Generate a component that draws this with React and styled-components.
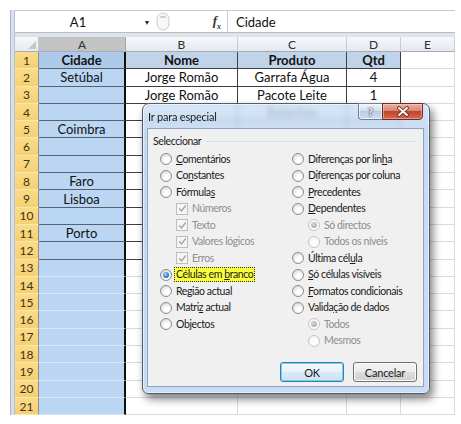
import React from 'react';
import styled, { createGlobalStyle, css } from 'styled-components';

const GlobalStyle = createGlobalStyle`
  html, body { margin: 0; padding: 0; background: #ffffff; }
  body { font-family: Lato, "Liberation Sans", sans-serif; color: #111; }
`;

const Page = styled.div`
  padding: 10px 0 0 10px;
`;

const Window = styled.div`
  position: relative;
  display: flex;
  width: 445px;
`;

const Edge = styled.div`
  width: 3px;
  flex: none;
  background: #d5e0ee;
  border-left: 1px solid #a9b7c9;
  border-right: 1px solid #b7c4d5;
`;

const Main = styled.div`
  flex: 1;
  display: flex;
  flex-direction: column;
`;

/* ---------- formula bar ---------- */

const FormulaBar = styled.div`
  height: 23px;
  box-sizing: border-box;
  display: flex;
  align-items: center;
  background: #ffffff;
  border-top: 1px solid #c3cbd6;
  border-bottom: 1px solid #b4bec9;
  font-size: 13px;
`;

const NameBox = styled.div`
  width: 126px;
  text-align: center;
`;

const NameArrow = styled.div`
  width: 12px;
  text-align: center;
  font-size: 7px;
  color: #2b2b2b;
`;

const FxZone = styled.div`
  width: 75px;
  height: 100%;
  box-sizing: border-box;
  display: flex;
  align-items: center;
  justify-content: space-between;
  padding: 0 6px 0 3px;
  border-right: 1px solid #c5ccd5;
`;

const Fx = styled.span`
  font-family: "Liberation Serif", serif;
  font-style: italic;
  font-weight: 700;
  font-size: 13px;
  color: #333;
  sub { font-size: 8px; }
`;

const Formula = styled.div`
  padding-left: 8px;
`;

const Band = styled.div`
  height: 4px;
  background: #dfe4ea;
`;

/* ---------- sheet grid ---------- */

const Grid = styled.div`
  display: grid;
  grid-template-columns: 24px 87px 112px 109px 54px 54px;
  grid-template-rows: 15px repeat(21, 17.3px);
`;

const Corner = styled.div`
  position: relative;
  box-sizing: border-box;
  background: linear-gradient(#f6f7f9, #e7eaef);
  border-right: 1px solid #c3c9d1;
  border-bottom: 1px solid #a4aeba;
  &::after {
    content: '';
    position: absolute;
    right: 2px;
    bottom: 2px;
    border-left: 8px solid transparent;
    border-bottom: 8px solid #c2c7cf;
  }
`;

const ColHead = styled.div`
  box-sizing: border-box;
  display: flex;
  align-items: center;
  justify-content: center;
  font-size: 12px;
  color: #2e2e2e;
  background: ${p => (p.$active ? '#c3c3c3' : 'linear-gradient(#f7f8fa, #e4e8ee)')};
  border-right: 1px solid ${p => (p.$active ? '#a6a6a6' : '#c6ccd4')};
  border-bottom: 1px solid #a4aeba;
`;

const RowHead = styled.div`
  box-sizing: border-box;
  display: flex;
  align-items: center;
  justify-content: center;
  font-size: 12px;
  color: #3a3322;
  background: linear-gradient(#fadc88, #f6d070);
  border-right: 1px solid #8f8f8f;
  border-bottom: 1px solid #fbe7ae;
`;

const Cell = styled.div`
  box-sizing: border-box;
  display: flex;
  align-items: center;
  justify-content: center;
  overflow: hidden;
  white-space: nowrap;
  font-size: 13px;
  font-weight: ${p => (p.$bold ? 700 : 400)};
  color: #111;
  background: ${p => p.$bg};
  border-right: ${p => p.$rw}px solid ${p => p.$rc};
  border-bottom: 1px solid ${p => p.$bc};
`;

/* ---------- dialog ---------- */

const Dialog = styled.div`
  position: absolute;
  left: 132px;
  top: 93px;
  width: 288px;
  height: 291px;
  box-sizing: border-box;
  display: flex;
  flex-direction: column;
  padding: 0 5px 6px 4px;
  border: 1px solid #4e5d6e;
  border-radius: 7px 7px 6px 6px;
  background: linear-gradient(rgba(205, 224, 246, 0.78), rgba(190, 212, 240, 0.86) 30px, rgba(196, 216, 242, 0.9));
  backdrop-filter: blur(2.5px);
  box-shadow: inset 0 0 0 1px rgba(255, 255, 255, 0.55), 3px 5px 9px rgba(0, 0, 0, 0.5);
  font-size: 10.5px;
  letter-spacing: -0.4px;
  color: #1b1b1b;
`;

const TitleBar = styled.div`
  height: 24px;
  flex: none;
  display: flex;
  justify-content: space-between;
  align-items: flex-start;
`;

const Title = styled.div`
  align-self: center;
  padding-left: 1px;
  font-size: 11px;
  letter-spacing: -0.2px;
  color: #1a1a1a;
`;

const Caption = styled.div`
  display: flex;
  margin-right: 1px;
  margin-top: -1px;
`;

const HelpButton = styled.div`
  width: 24px;
  height: 17px;
  box-sizing: border-box;
  display: flex;
  align-items: center;
  justify-content: center;
  border: 1px solid #6f8199;
  border-right: none;
  border-radius: 0 0 0 4px;
  background: linear-gradient(#eef4fb, #d3e0f0 45%, #bccde3 50%, #cddcee);
  box-shadow: inset 0 0 0 1px rgba(255, 255, 255, 0.6);
  font-size: 12px;
  font-weight: 700;
  letter-spacing: 0;
  color: #f4f7fb;
  text-shadow: 0 0 1px #4b5566, 0 0 1px #4b5566, 0 0 2px #4b5566;
`;

const CloseButton = styled.div`
  width: 41px;
  height: 17px;
  box-sizing: border-box;
  display: flex;
  align-items: center;
  justify-content: center;
  border: 1px solid #6b2c22;
  border-radius: 0 0 4px 0;
  background: linear-gradient(#eab2a4, #d98672 45%, #c4432d 50%, #d5694f);
  box-shadow: inset 0 0 0 1px rgba(255, 220, 210, 0.45);
`;

const Client = styled.div`
  flex: 1;
  display: flex;
  flex-direction: column;
  background: #f0f0f0;
  border: 1px solid #8ea4c0;
  padding: 5px 0 4px 0;
`;

const GroupHeader = styled.div`
  height: 14px;
  display: flex;
  align-items: center;
  padding: 0 8px 0 5px;
  gap: 5px;
`;

const Rule = styled.div`
  flex: 1;
  height: 1px;
  background: #d5dde5;
`;

const Columns = styled.div`
  display: grid;
  grid-template-columns: 132px 1fr;
  padding-left: 12px;
  margin-top: 3px;
`;

const Column = styled.div`
  display: flex;
  flex-direction: column;
`;

const OptionRow = styled.div`
  height: 16.5px;
  display: flex;
  align-items: center;
  gap: 4px;
  padding-left: ${p => (p.$sub ? 16 : 0)}px;
  color: ${p => (p.$disabled ? '#8e8e8e' : '#1b1b1b')};
  white-space: nowrap;
`;

const Label = styled.span`
  line-height: 15px;
  ${p =>
    p.$focus &&
    css`
      background: #f9ff3a;
      outline: 1px dotted #2a2a2a;
      outline-offset: -1px;
      padding: 0 2px;
      margin-left: -2px;
    `}
`;

const Radio = styled.span`
  position: relative;
  flex: none;
  width: 12px;
  height: 12px;
  box-sizing: border-box;
  border-radius: 50%;
  border: 1px solid ${p => (p.$disabled ? '#c6c6c6' : '#8d8d8d')};
  background: ${p =>
    p.$disabled
      ? 'radial-gradient(circle at 55% 60%, #fdfdfd 0 35%, #ededed 100%)'
      : 'radial-gradient(circle at 60% 65%, #ffffff 0 25%, #e4e4e4 65%, #c4c4c4 100%)'};
  &::after {
    content: '';
    display: ${p => (p.$checked ? 'block' : 'none')};
    position: absolute;
    left: 2px;
    top: 2px;
    width: 6px;
    height: 6px;
    border-radius: 50%;
    background: ${p =>
      p.$disabled
        ? 'radial-gradient(circle at 40% 35%, #d8d8d8, #9c9c9c)'
        : 'radial-gradient(circle at 40% 35%, #a6ddff, #2a6fc6 65%, #163f80)'};
  }
`;

const CheckBox = styled.span`
  flex: none;
  width: 12px;
  height: 12px;
  box-sizing: border-box;
  display: flex;
  align-items: center;
  justify-content: center;
  border: 1px solid #bdbdbd;
  background: #f5f5f5;
`;

const ButtonRow = styled.div`
  margin-top: auto;
  display: flex;
  justify-content: flex-end;
  gap: 9px;
  padding-right: 6px;
`;

const PushButton = styled.div`
  width: 64px;
  height: 20px;
  box-sizing: border-box;
  display: flex;
  align-items: center;
  justify-content: center;
  border-radius: 3px;
  border: 1px solid ${p => (p.$default ? '#3d7bad' : '#707070')};
  background: ${p =>
    p.$default
      ? 'linear-gradient(#f3f8fc, #e9f2fa 50%, #d9e9f6 51%, #cfe3f3)'
      : 'linear-gradient(#f4f4f4, #ebebeb 50%, #dddddd 51%, #d0d0d0)'};
  box-shadow: inset 0 0 0 1px ${p => (p.$default ? '#6fd1f6' : '#fbfbfb')};
  font-size: 11px;
  letter-spacing: -0.2px;
  color: #1b1b1b;
`;

/* ---------- data ---------- */

const COLS = ['A', 'B', 'C', 'D', 'E'];

const DATA = {
  1: ['Cidade', 'Nome', 'Produto', 'Qtd'],
  2: ['Setúbal', 'Jorge Romão', 'Garrafa Água', '4'],
  3: ['', 'Jorge Romão', 'Pacote Leite', '1'],
  4: ['', '', 'Bolachas'],
  5: ['Coimbra'],
  8: ['Faro'],
  9: ['Lisboa'],
  11: ['Porto'],
};

const TABLE_LINE = '#3e3e3e';
const TABLE_LINE_SEL = '#56616d';
const GRID_LINE = '#d9dbdd';
const GRID_LINE_SEL = '#d6e5f5';

function cellStyle(row, col) {
  const inTable = row <= 12 && col <= 3;
  const selected = col === 0;
  let bg = '#ffffff';
  if (row === 1 && col <= 3) bg = selected ? '#aecaeb' : '#c1d3e9';
  else if (selected) bg = '#bad6f3';

  const bc = inTable ? (selected ? TABLE_LINE_SEL : TABLE_LINE) : selected ? GRID_LINE_SEL : GRID_LINE;
  let rc = inTable ? TABLE_LINE : GRID_LINE;
  let rw = 1;
  if (selected) {
    rc = '#101010';
    rw = 2;
  }
  return { bg, bc, rc, rw };
}

const u = (before, key, after) => (
  <>
    {before}
    <u>{key}</u>
    {after}
  </>
);

const LEFT_OPTIONS = [
  { label: u('', 'C', 'omentários') },
  { label: u('Co', 'n', 'stantes') },
  { label: u('Fórmula', 's', '') },
  { label: 'Números', check: true, sub: true, disabled: true },
  { label: 'Texto', check: true, sub: true, disabled: true },
  { label: 'Valores lógicos', check: true, sub: true, disabled: true },
  { label: 'Erros', check: true, sub: true, disabled: true },
  { label: u('Células em ', 'b', 'ranco'), checked: true, focus: true },
  { label: u('Re', 'g', 'ião actual') },
  { label: u('Matri', 'z', ' actual') },
  { label: u('Ob', 'j', 'ectos') },
];

const RIGHT_OPTIONS = [
  { label: u('Diferenças por lin', 'h', 'a') },
  { label: u('D', 'i', 'ferenças por coluna') },
  { label: u('', 'P', 'recedentes') },
  { label: u('', 'D', 'ependentes') },
  { label: 'Só directos', sub: true, disabled: true, checked: true },
  { label: 'Todos os níveis', sub: true, disabled: true },
  { label: u('Última cél', 'u', 'la') },
  { label: u('', 'S', 'ó células visíveis') },
  { label: u('', 'F', 'ormatos condicionais') },
  { label: u('Valida', 'ç', 'ão de dados') },
  { label: 'Todos', sub: true, disabled: true, checked: true },
  { label: 'Mesmos', sub: true, disabled: true },
];

function CheckMark() {
  return (
    <svg width="9" height="9" viewBox="0 0 9 9">
      <polyline points="1.2,4.6 3.5,7 7.8,1.4" fill="none" stroke="#a4a4a4" strokeWidth="1.4" />
    </svg>
  );
}

function Option({ label, check, checked, disabled, sub, focus }) {
  return (
    <OptionRow $sub={sub} $disabled={disabled}>
      {check ? (
        <CheckBox>
          <CheckMark />
        </CheckBox>
      ) : (
        <Radio $checked={checked} $disabled={disabled} />
      )}
      <Label $focus={focus}>{label}</Label>
    </OptionRow>
  );
}

function BarKnob() {
  return (
    <svg width="14" height="19" viewBox="0 0 14 19">
      <rect x="1" y="1" width="12" height="17" rx="6" fill="#f6f7f8" stroke="#c9ced4" />
      <path d="M4 5.5 Q7 3.8 10 5.5" fill="none" stroke="#b9bfc6" strokeWidth="1.2" />
    </svg>
  );
}

function CloseGlyph() {
  return (
    <svg width="14" height="11" viewBox="0 0 14 11">
      <path d="M3 2 L11 9 M11 2 L3 9" stroke="#5a2418" strokeWidth="3.6" strokeLinecap="round" />
      <path d="M3 2 L11 9 M11 2 L3 9" stroke="#ffffff" strokeWidth="2" strokeLinecap="round" />
    </svg>
  );
}

export default function App() {
  const rows = Array.from({ length: 21 }, (_, i) => i + 1);
  return (
    <>
      <GlobalStyle />
      <Page>
        <Window>
          <Edge />
          <Main>
            <FormulaBar>
              <NameBox>A1</NameBox>
              <NameArrow>▼</NameArrow>
              <FxZone>
                <BarKnob />
                <Fx>
                  f<sub>x</sub>
                </Fx>
              </FxZone>
              <Formula>Cidade</Formula>
            </FormulaBar>
            <Band />
            <Grid>
              <Corner />
              {COLS.map((c, i) => (
                <ColHead key={c} $active={i === 0}>
                  {c}
                </ColHead>
              ))}
              {rows.map(r => (
                <React.Fragment key={r}>
                  <RowHead>{r}</RowHead>
                  {COLS.map((c, ci) => {
                    const s = cellStyle(r, ci);
                    const value = (DATA[r] && DATA[r][ci]) || '';
                    return (
                      <Cell key={c} $bg={s.bg} $bc={s.bc} $rc={s.rc} $rw={s.rw} $bold={r === 1}>
                        {value}
                      </Cell>
                    );
                  })}
                </React.Fragment>
              ))}
            </Grid>
          </Main>

          <Dialog>
            <TitleBar>
              <Title>Ir para especial</Title>
              <Caption>
                <HelpButton>?</HelpButton>
                <CloseButton>
                  <CloseGlyph />
                </CloseButton>
              </Caption>
            </TitleBar>
            <Client>
              <GroupHeader>
                <span>Seleccionar</span>
                <Rule />
              </GroupHeader>
              <Columns>
                <Column>
                  {LEFT_OPTIONS.map((o, i) => (
                    <Option key={i} {...o} />
                  ))}
                </Column>
                <Column>
                  {RIGHT_OPTIONS.map((o, i) => (
                    <Option key={i} {...o} />
                  ))}
                </Column>
              </Columns>
              <ButtonRow>
                <PushButton $default>OK</PushButton>
                <PushButton>Cancelar</PushButton>
              </ButtonRow>
            </Client>
          </Dialog>
        </Window>
      </Page>
    </>
  );
}
